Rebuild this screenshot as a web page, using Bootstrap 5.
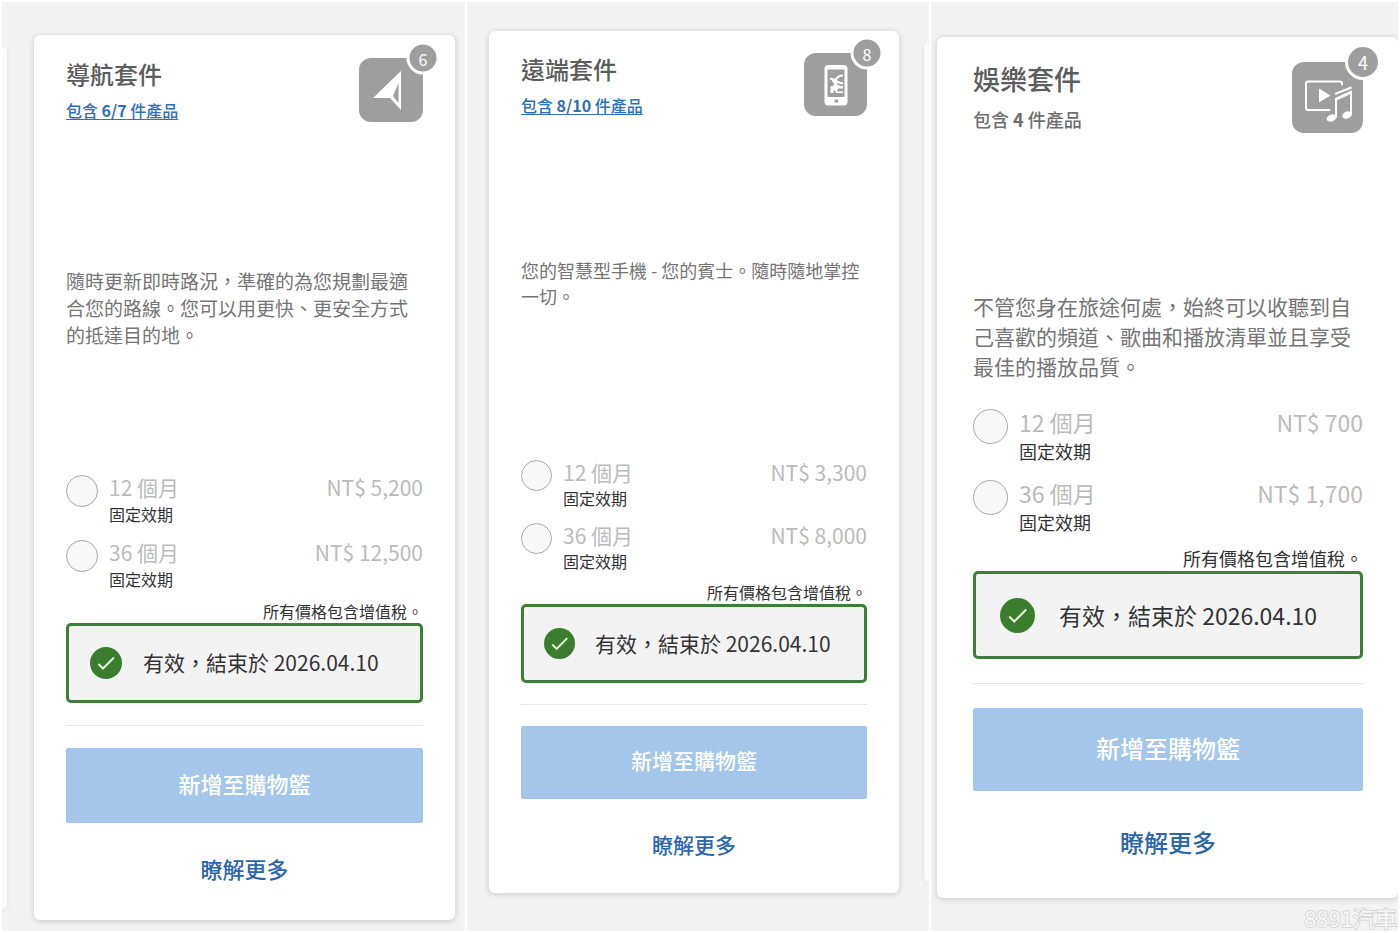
<!DOCTYPE html>
<html lang="zh-Hant-TW">
<head>
<meta charset="utf-8">
<meta name="viewport" content="width=device-width, initial-scale=1">
<title>數位服務套件</title>
<link href="https://cdn.jsdelivr.net/npm/bootstrap@5.3.0/dist/css/bootstrap.min.css" rel="stylesheet">
<style>
  body { font-family: "Noto Sans CJK TC", "Noto Sans", sans-serif; background: #fff; color: #333; }

  .board { display: grid; grid-template-columns: 463fr 462fr 467fr; gap: 2px; padding: 2px; }
  .pane { background: #f3f3f3; overflow: hidden; }

  /* Sizes of one pane; the other two panes override them below */
  .pane {
    --icon: 64px; --badge: 27px; --radio: 32px;
    --fs-title: 24px; --fs-sub: 16px; --fs-body: 19px; --fs-option: 21px; --fs-button: 22px;
    --lh-title: 32px; --lh-sub: 24px; --lh-body: 27px; --lh-option: 25px; --lh-term: 28px; --lh-note: 20px;
    --head: 209px; --text: 208px; --row-gap: 12px; --status: 80px; --button: 75px;
    --rule-gap: 22px; --link-gap: 29px; --status-pad: 21px;
  }
  .pane-remote {
    --icon: 63px; --radio: 31px;
    --fs-body: 18px; --fs-button: 21px;
    --lh-body: 26px; --lh-term: 26px;
    --head: 204px; --text: 203px; --status: 79px; --button: 73px;
    --rule-gap: 21px; --status-pad: 20px;
  }
  .pane-media {
    --icon: 71px; --badge: 30px; --radio: 35px;
    --fs-title: 27px; --fs-sub: 18px; --fs-body: 21px; --fs-option: 23px; --fs-button: 24px;
    --lh-title: 34px; --lh-sub: 30px; --lh-body: 30px; --lh-option: 26px; --lh-term: 33px; --lh-note: 22px;
    --head: 229px; --text: 118px; --status: 88px; --button: 83px;
    --rule-gap: 24px; --link-gap: 35px; --status-pad: 24px;
  }
  .pane-nav { padding: 33px 10px 11px 0; }
  .pane-remote { padding: 29px 0 11px 22px; }
  .pane-media { padding: 35px 0 11px 6px; }

  .package { border: 0; border-radius: 6px; box-shadow: 0 1px 6px rgba(0, 0, 0, .18); padding: 23px 32px 36px; min-width: 0; }
  .pane-nav .package { margin-left: 27px; }
  .pane-remote .package { margin-right: 25px; padding-top: 22px; padding-bottom: 33px; }
  .pane-media .package { padding: 25px 35px 40px 36px; }
  .peek { width: 5px; margin: 11px 0; background: #fbfbfb; flex: none; box-shadow: 0 1px 4px rgba(0, 0, 0, .08); }
  .peek-start { border-radius: 0 5px 5px 0; }
  .peek-end { border-radius: 5px 0 0 5px; }

  .package-head { min-height: var(--head); }
  .package-title { font-size: var(--fs-title); line-height: var(--lh-title); font-weight: 500; color: #5c5c5c; margin: 0 0 8px; }
  .package-sub { font-size: var(--fs-sub); line-height: var(--lh-sub); font-weight: 500; color: #6f6f6f; margin: 0; }
  .package-sub a { color: #2f70ba; text-underline-offset: 2px; }
  .package-icon { width: var(--icon); height: var(--icon); border-radius: 12px; background: #9e9e9e; }
  .package-icon svg { width: 100%; height: 100%; display: block; }
  .count { position: absolute; top: 0; right: 0; transform: translate(50%, -50%); box-sizing: content-box;
    width: var(--badge); height: var(--badge); border: 3px solid #fff; border-radius: 50%;
    background: #9e9e9e; color: #fff; font-size: var(--fs-sub); line-height: 1; }
  .package-text { font-size: var(--fs-body); line-height: var(--lh-body); color: #757575; min-height: var(--text); margin: 0; }

  .options { display: grid; gap: var(--row-gap); }
  .option .form-check-input { width: var(--radio); height: var(--radio); margin: 0 11px 0 0; border: 1px solid #aaa; background-color: #f8f8f8; opacity: 1; flex: none; }
  .option label { color: #bbb; font-size: var(--fs-option); line-height: var(--lh-option); }
  .option .term { display: block; color: #333; font-size: var(--fs-sub); line-height: var(--lh-term); }
  .note { font-size: var(--fs-sub); line-height: var(--lh-note); margin: 8px 0 2px; }

  .status { min-height: var(--status); border: 3px solid #3f7d3a; border-radius: 5px; background: #f3f3f3;
    padding: 0 var(--status-pad); gap: var(--status-pad); font-size: var(--fs-option); }
  .status svg { width: var(--radio); height: var(--radio); flex: none; }
  .package hr { margin: var(--rule-gap) 0; border-color: #999; }
  .btn-cart { min-height: var(--button); border-radius: 2px; font-size: var(--fs-button); font-weight: 500; padding: 4px 12px 8px; }
  .btn-cart:disabled { background: #a4c6ea; border-color: #a4c6ea; color: #fff; opacity: 1; }
  .more { margin-top: var(--link-gap); font-size: var(--fs-button); line-height: 32px; font-weight: 500; color: #2b66ae; }

  .watermark { position: absolute; right: 3px; bottom: 2px; font-size: 22px; line-height: 28px; color: #f8f8f8; -webkit-text-stroke: 2px #d8d8d8; paint-order: stroke fill; }
</style>
</head>
<body>
<main class="board min-vh-100 position-relative">

  <section class="pane pane-nav">
    <div class="d-flex">
      <div class="peek peek-start"></div>
      <article class="package card flex-fill">
        <header class="package-head d-flex justify-content-between align-items-start">
          <div>
            <h2 class="package-title">導航套件</h2>
            <p class="package-sub"><a href="#nav-products">包含 <b>6/7</b> 件產品</a></p>
          </div>
          <div class="package-icon position-relative">
            <svg viewBox="0 0 64 64" aria-hidden="true"><path fill="#fff" fill-rule="evenodd" d="M42 13V52L31 40H14ZM39.500 25 34 38 39.500 45Z"/></svg>
            <span class="count d-flex align-items-center justify-content-center">6</span>
          </div>
        </header>
        <p class="package-text">隨時更新即時路況，準確的為您規劃最適合您的路線。您可以用更快、更安全方式的抵達目的地。</p>
        <div class="options">
          <div class="option d-flex">
            <input class="form-check-input" type="radio" name="nav" id="nav12" disabled>
            <label class="flex-fill" for="nav12"><span class="d-flex justify-content-between"><span>12 個月</span><span>NT$ 5,200</span></span><span class="term">固定效期</span></label>
          </div>
          <div class="option d-flex">
            <input class="form-check-input" type="radio" name="nav" id="nav36" disabled>
            <label class="flex-fill" for="nav36"><span class="d-flex justify-content-between"><span>36 個月</span><span>NT$ 12,500</span></span><span class="term">固定效期</span></label>
          </div>
        </div>
        <p class="note text-end">所有價格包含增值稅。</p>
        <div class="status d-flex align-items-center">
          <svg viewBox="0 0 32 32" aria-hidden="true"><circle cx="16" cy="16" r="16" fill="#3a7d2c"/><path d="M8.500 17 13 21.500 24 10.500" fill="none" stroke="#e4f3df" stroke-width="2"/></svg>
          <span>有效，結束於 2026.04.10</span>
        </div>
        <hr>
        <button class="btn btn-cart w-100" type="button" disabled>新增至購物籃</button>
        <a class="more d-block text-center text-decoration-none" href="#nav-more">瞭解更多</a>
      </article>
    </div>
  </section>

  <section class="pane pane-remote">
    <div class="d-flex">
      <article class="package card flex-fill">
        <header class="package-head d-flex justify-content-between align-items-start">
          <div>
            <h2 class="package-title">遠端套件</h2>
            <p class="package-sub"><a href="#remote-products">包含 <b>8/10</b> 件產品</a></p>
          </div>
          <div class="package-icon position-relative">
            <svg viewBox="0 0 63 63" aria-hidden="true">
              <path fill="#fff" fill-rule="evenodd" d="M24 12H40Q43.500 12 43.500 15.500V49Q43.500 52.500 40 52.500H24Q20.500 52.500 20.500 49V15.500Q20.500 12 24 12ZM23.500 16.500V44H40.500V16.500ZM30.500 46.500V49.500H34V46.500Z"/>
              <path fill="none" stroke="#fff" stroke-width="2" d="M39 22.500Q34 22.500 31.500 27L26 25.500M31 27Q35 31 39 30"/>
              <path fill="#fff" d="M28 25 33 28 33.500 32Q36 33 39 33V35.500H34L33 38.500H39V40H32L31 37.500H29.500V40H26.500V33H29.500L30 30.500 28 28.500Z"/>
            </svg>
            <span class="count d-flex align-items-center justify-content-center">8</span>
          </div>
        </header>
        <p class="package-text">您的智慧型手機 - 您的賓士。隨時隨地掌控一切。</p>
        <div class="options">
          <div class="option d-flex">
            <input class="form-check-input" type="radio" name="remote" id="remote12" disabled>
            <label class="flex-fill" for="remote12"><span class="d-flex justify-content-between"><span>12 個月</span><span>NT$ 3,300</span></span><span class="term">固定效期</span></label>
          </div>
          <div class="option d-flex">
            <input class="form-check-input" type="radio" name="remote" id="remote36" disabled>
            <label class="flex-fill" for="remote36"><span class="d-flex justify-content-between"><span>36 個月</span><span>NT$ 8,000</span></span><span class="term">固定效期</span></label>
          </div>
        </div>
        <p class="note text-end">所有價格包含增值稅。</p>
        <div class="status d-flex align-items-center">
          <svg viewBox="0 0 32 32" aria-hidden="true"><circle cx="16" cy="16" r="16" fill="#3a7d2c"/><path d="M8.500 17 13 21.500 24 10.500" fill="none" stroke="#e4f3df" stroke-width="2"/></svg>
          <span>有效，結束於 2026.04.10</span>
        </div>
        <hr>
        <button class="btn btn-cart w-100" type="button" disabled>新增至購物籃</button>
        <a class="more d-block text-center text-decoration-none" href="#remote-more">瞭解更多</a>
      </article>
      <div class="peek peek-end"></div>
    </div>
  </section>

  <section class="pane pane-media">
    <div class="d-flex">
      <article class="package card flex-fill">
        <header class="package-head d-flex justify-content-between align-items-start">
          <div>
            <h2 class="package-title">娛樂套件</h2>
            <p class="package-sub">包含 <b>4</b> 件產品</p>
          </div>
          <div class="package-icon position-relative">
            <svg viewBox="0 0 71 71" aria-hidden="true">
              <path fill="none" stroke="#fff" stroke-width="2" stroke-linecap="round" d="M50 22.500V21Q50 19.500 48 19.500H16Q14 19.500 14 21.500V46Q14 48 16 48H37.500"/>
              <path fill="#fff" d="M27 26.500 38.500 33.500 27 40.500Z"/>
              <path fill="none" stroke="#fff" stroke-width="2" d="M43 32 59.500 25.500M44 56V37L59 30V53"/>
              <path fill="none" stroke="#fff" stroke-width="3" d="M43.500 37.500 59.500 30"/>
              <ellipse cx="39.500" cy="56" rx="5" ry="3.500" transform="rotate(-20 39.500 56)" fill="#fff"/>
              <ellipse cx="55" cy="53" rx="5" ry="3.500" transform="rotate(-20 55 53)" fill="#fff"/>
            </svg>
            <span class="count d-flex align-items-center justify-content-center">4</span>
          </div>
        </header>
        <p class="package-text">不管您身在旅途何處，始終可以收聽到自己喜歡的頻道、歌曲和播放清單並且享受最佳的播放品質。</p>
        <div class="options">
          <div class="option d-flex">
            <input class="form-check-input" type="radio" name="media" id="media12" disabled>
            <label class="flex-fill" for="media12"><span class="d-flex justify-content-between"><span>12 個月</span><span>NT$ 700</span></span><span class="term">固定效期</span></label>
          </div>
          <div class="option d-flex">
            <input class="form-check-input" type="radio" name="media" id="media36" disabled>
            <label class="flex-fill" for="media36"><span class="d-flex justify-content-between"><span>36 個月</span><span>NT$ 1,700</span></span><span class="term">固定效期</span></label>
          </div>
        </div>
        <p class="note text-end">所有價格包含增值稅。</p>
        <div class="status d-flex align-items-center">
          <svg viewBox="0 0 32 32" aria-hidden="true"><circle cx="16" cy="16" r="16" fill="#3a7d2c"/><path d="M8.500 17 13 21.500 24 10.500" fill="none" stroke="#e4f3df" stroke-width="2"/></svg>
          <span>有效，結束於 2026.04.10</span>
        </div>
        <hr>
        <button class="btn btn-cart w-100" type="button" disabled>新增至購物籃</button>
        <a class="more d-block text-center text-decoration-none" href="#media-more">瞭解更多</a>
      </article>
    </div>
  </section>

  <div class="watermark">8891汽車</div>
</main>
<script src="https://cdn.jsdelivr.net/npm/bootstrap@5.3.0/dist/js/bootstrap.bundle.min.js"></script>
</body>
</html>
